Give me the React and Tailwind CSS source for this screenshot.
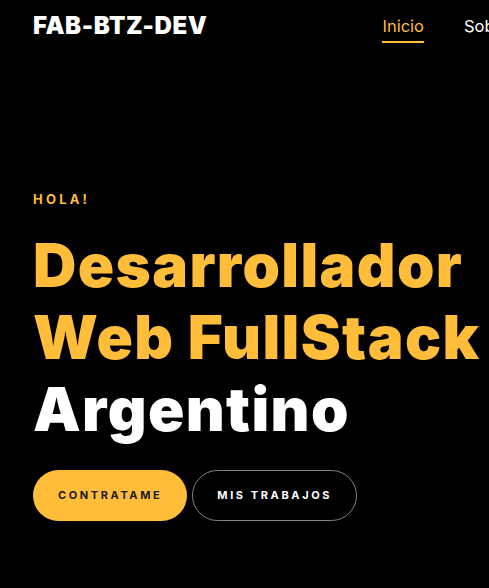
import React from "react";

const navItems = ["Inicio", "Sobre mí", "Servicios", "Proyectos", "Contacto"];

export default function App() {
  return (
    <div
      className="min-h-screen w-full overflow-hidden bg-black text-white"
      style={{ fontFamily: "Inter, 'Noto Sans', sans-serif" }}
    >
      <header className="flex h-[52px] items-center px-[33px]">
        <span className="shrink-0 text-[24px] font-black tracking-[0.6px] text-white">FAB-BTZ-DEV</span>
        <nav className="ml-[175px] flex shrink-0 gap-[40px] text-[16.5px]">
          {navItems.map((item, i) => (
            <a
              key={item}
              href="#"
              className={`relative whitespace-nowrap ${i === 0 ? "text-[#ffbd39]" : "text-white"}`}
            >
              {item}
              {i === 0 && <span className="absolute left-0 right-0 top-[27px] h-[2px] bg-[#ffbd39]" />}
            </a>
          ))}
        </nav>
      </header>

      <section className="px-[33px] pt-[138px]">
        <p className="text-[13px] font-bold uppercase tracking-[3.2px] text-[#ffbd39]">Hola!</p>
        <h1 className="mt-[19px] whitespace-nowrap text-[60px] font-black leading-[72px] tracking-[1.4px]">
          <span className="block text-[#ffbd39]">Desarrollador</span>
          <span className="block text-[#ffbd39]">Web FullStack</span>
          <span className="block text-white">Argentino</span>
        </h1>
        <div className="mt-[25px] flex gap-[5px]">
          <button className="h-[51px] rounded-full bg-[#ffbd39] px-[25px] text-[11px] font-bold uppercase tracking-[2.6px] text-[#1a1a1a]">
            Contratame
          </button>
          <button className="h-[51px] rounded-full border border-white/50 px-[24px] text-[11px] font-bold uppercase tracking-[2.6px] text-white">
            Mis trabajos
          </button>
        </div>
      </section>
    </div>
  );
}
